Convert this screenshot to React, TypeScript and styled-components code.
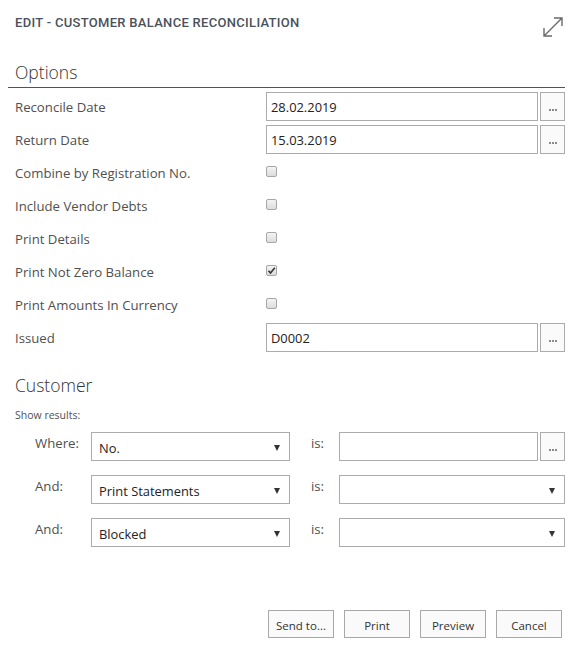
import React from "react";
import styled, { createGlobalStyle } from "styled-components";

const Global = createGlobalStyle`
  html, body { margin: 0; padding: 0; background: #fff; }
  body { font-family: "Open Sans", "Liberation Sans", sans-serif; color: #505050; }
  * { box-sizing: border-box; }
`;

const Page = styled.div`
  width: 581px;
  height: 657px;
  display: flex;
  flex-direction: column;
  background: #fff;
`;

const Header = styled.div`
  display: flex;
  justify-content: space-between;
  align-items: flex-start;
  padding: 15px 16px 0 15px;
  height: 58px;
`;

const Title = styled.div`
  font-family: "Roboto", "Liberation Sans", sans-serif;
  font-weight: 500;
  font-size: 13px;
  letter-spacing: 0.3px;
  color: #4a515c;
  line-height: 16px;
`;

const Expand = styled.svg`
  width: 24px;
  height: 24px;
`;

const SectionTitle = styled.div<{ $underline?: boolean }>`
  font-family: "Open Sans", "Liberation Sans", sans-serif;
  font-weight: 300;
  font-size: 17.5px;
  color: #333;
  line-height: 24px;
  margin: 0 16px 0 8px;
  padding: 2px 0 ${(p) => (p.$underline ? "3px" : "0")} 7px;
  border-bottom: ${(p) => (p.$underline ? "1px solid #4b5260" : "none")};
`;

const Fields = styled.div`
  display: flex;
  flex-direction: column;
  gap: 4px;
  padding: 4px 16px 0 15px;
`;

const FieldRow = styled.div`
  display: grid;
  grid-template-columns: 249px 272px 25px;
  column-gap: 2px;
  align-items: center;
  height: 29px;
`;

const Label = styled.div`
  font-size: 13.2px;
  color: #505050;
  white-space: nowrap;
`;

const TextBox = styled.div`
  height: 29px;
  border: 1px solid #ababab;
  background: #fff;
  font-size: 12.9px;
  color: #222;
  padding: 0 4px;
  display: flex;
  align-items: center;
`;

const Ellipsis = styled.div`
  height: 29px;
  width: 25px;
  border: 1px solid #ababab;
  background: #fafafa;
  display: flex;
  align-items: center;
  justify-content: center;
  padding-top: 6px;
  gap: 1px;
`;

const Dot = styled.span`
  width: 2px;
  height: 2px;
  background: #8a8a8a;
`;

const Check = styled.div`
  width: 11px;
  height: 11px;
  border: 1px solid #a6a6a6;
  border-radius: 2px;
  background: linear-gradient(#f4f4f4, #dcdcdc);
  margin-top: -3px;
  display: flex;
  align-items: center;
  justify-content: center;
`;

const CustomerBlock = styled.div`
  margin-top: 19px;
  display: flex;
  flex-direction: column;
`;

const ShowResults = styled.div`
  font-size: 10.5px;
  color: #505050;
  padding: 11px 0 0 15px;
  line-height: 14px;
`;

const Filters = styled.div`
  display: flex;
  flex-direction: column;
  gap: 14px;
  padding: 10px 16px 0 35px;
`;

const FilterRow = styled.div`
  display: grid;
  grid-template-columns: 56px 199px 49px 199px 27px;
  align-items: start;
  height: 29px;
`;

const FilterLabel = styled.div<{ $indent?: number }>`
  font-size: 13.2px;
  color: #505050;
  padding-top: 2px;
  padding-left: ${(p) => p.$indent ?? 0}px;
`;

const Select = styled.div`
  height: 29px;
  border: 1px solid #ababab;
  background: #fff;
  font-size: 12.9px;
  color: #222;
  padding: 2px 7px 0 7px;
  display: flex;
  align-items: center;
  justify-content: space-between;
`;

const Arrow = styled.span`
  width: 0;
  height: 0;
  border-left: 3.5px solid transparent;
  border-right: 3.5px solid transparent;
  border-top: 6px solid #333;
  margin-right: 2px;
`;

const ValueCell = styled.div`
  grid-column: 4 / 6;
  display: flex;
  gap: 2px;
`;

const Spacer = styled.div`
  flex: 1;
`;

const Footer = styled.div`
  display: flex;
  justify-content: flex-end;
  gap: 10px;
  padding: 0 19px 19px 0;
`;

const Button = styled.div`
  width: 66px;
  height: 28px;
  border: 1px solid #a8a8a8;
  background: #fafafa;
  font-size: 11.5px;
  color: #333;
  display: flex;
  align-items: center;
  justify-content: center;
  padding-top: 2px;
`;

const Dots = () => (
  <Ellipsis>
    <Dot />
    <Dot />
    <Dot />
  </Ellipsis>
);

const CheckMark = () => (
  <svg width="9" height="9" viewBox="0 0 9 9">
    <path d="M1.5 4.8 L3.5 7 L7.8 1.8" stroke="#333" strokeWidth="1.6" fill="none" />
  </svg>
);

const options: { label: string; checked: boolean }[] = [
  { label: "Combine by Registration No.", checked: false },
  { label: "Include Vendor Debts", checked: false },
  { label: "Print Details", checked: false },
  { label: "Print Not Zero Balance", checked: true },
  { label: "Print Amounts In Currency", checked: false },
];

const filters = [
  { label: "Where:", field: "No.", lookup: true },
  { label: "And:", field: "Print Statements", lookup: false },
  { label: "And:", field: "Blocked", lookup: false },
];

export default function App() {
  return (
    <>
      <Global />
      <Page>
        <Header>
          <Title>EDIT - CUSTOMER BALANCE RECONCILIATION</Title>
          <Expand viewBox="0 0 24 24">
            <path d="M3 21 L21 3 M13 3 H21 V11 M3 13 V21 H11" stroke="#6a6a6a" strokeWidth="1.4" fill="none" />
          </Expand>
        </Header>
        <SectionTitle $underline>Options</SectionTitle>
        <Fields>
          <FieldRow>
            <Label>Reconcile Date</Label>
            <TextBox>28.02.2019</TextBox>
            <Dots />
          </FieldRow>
          <FieldRow>
            <Label>Return Date</Label>
            <TextBox>15.03.2019</TextBox>
            <Dots />
          </FieldRow>
          {options.map((o) => (
            <FieldRow key={o.label}>
              <Label>{o.label}</Label>
              <div>
                <Check>{o.checked && <CheckMark />}</Check>
              </div>
            </FieldRow>
          ))}
          <FieldRow>
            <Label>Issued</Label>
            <TextBox>D0002</TextBox>
            <Dots />
          </FieldRow>
        </Fields>
        <CustomerBlock>
          <SectionTitle>Customer</SectionTitle>
          <ShowResults>Show results:</ShowResults>
          <Filters>
            {filters.map((f, i) => (
              <FilterRow key={i}>
                <FilterLabel>{f.label}</FilterLabel>
                <Select>
                  {f.field}
                  <Arrow />
                </Select>
                <FilterLabel $indent={21}>is:</FilterLabel>
                <ValueCell>
                  {f.lookup ? (
                    <>
                      <TextBox style={{ flex: 1 }} />
                      <Dots />
                    </>
                  ) : (
                    <Select style={{ flex: 1 }}>
                      <span />
                      <Arrow />
                    </Select>
                  )}
                </ValueCell>
              </FilterRow>
            ))}
          </Filters>
        </CustomerBlock>
        <Spacer />
        <Footer>
          <Button>Send to...</Button>
          <Button>Print</Button>
          <Button>Preview</Button>
          <Button>Cancel</Button>
        </Footer>
      </Page>
    </>
  );
}
